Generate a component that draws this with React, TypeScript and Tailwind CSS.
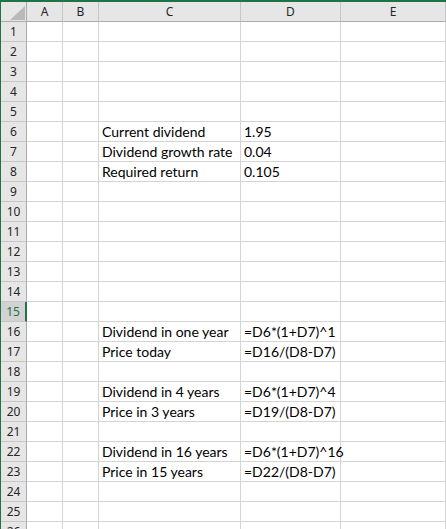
import React from "react";

const cols = ["A", "B", "C", "D", "E"];

// cell contents by row: [column C, column D]
const data: Record<number, [string, string]> = {
  6: ["Current dividend", "1.95"],
  7: ["Dividend growth rate", "0.04"],
  8: ["Required return", "0.105"],
  16: ["Dividend in one year", "=D6*(1+D7)^1"],
  17: ["Price today", "=D16/(D8-D7)"],
  19: ["Dividend in 4 years", "=D6*(1+D7)^4"],
  20: ["Price in 3 years", "=D19/(D8-D7)"],
  22: ["Dividend in 16 years", "=D6*(1+D7)^16"],
  23: ["Price in 15 years", "=D22/(D8-D7)"],
};

const selectedRow = 15;
const rows = Array.from({ length: 26 }, (_, i) => i + 1);

const headerFont = { fontFamily: '"Noto Sans", "DejaVu Sans", sans-serif' };
const cellFont = { fontFamily: 'Lato, "Liberation Sans", sans-serif' };

function Corner() {
  return (
    <div className="relative h-5 border-r border-b border-r-[#ababab] border-b-[#ababab] bg-[#e6e6e6]">
      <svg className="absolute left-[9px] top-[4px]" width="15" height="14" viewBox="0 0 15 14">
        <polygon points="15,0 15,14 0,14" fill="#b9b9b9" />
      </svg>
    </div>
  );
}

function ColHeader({ label }: { label: string }) {
  return (
    <div
      className="flex h-5 items-center justify-center border-r border-b border-r-[#c6c6c6] border-b-[#ababab] bg-[#e6e6e6] text-[12px] text-[#262626]"
      style={headerFont}
    >
      {label}
    </div>
  );
}

function RowHeader({ n }: { n: number }) {
  const sel = n === selectedRow;
  return (
    <div
      className={
        sel
          ? "flex h-5 items-center justify-center border-r-2 border-b border-r-[#217346] border-b-[#c6c6c6] bg-[#d2d2d2] text-[12px] text-[#217346]"
          : "flex h-5 items-center justify-center border-r border-b border-r-[#ababab] border-b-[#c6c6c6] bg-[#e6e6e6] text-[12px] text-[#262626]"
      }
      style={headerFont}
    >
      {n}
    </div>
  );
}

function Cell({ text }: { text?: string }) {
  return (
    <div
      className="h-5 whitespace-nowrap border-r border-b border-[#d4d4d4] pl-[3px] text-[14px] leading-[20px] text-black"
      style={cellFont}
    >
      {text}
    </div>
  );
}

export default function App() {
  return (
    <div className="h-[529px] w-[446px] overflow-hidden border-t-2 border-l border-[#217346] bg-white">
      <div className="grid grid-cols-[26px_36px_36px_142px_100px_1fr]">
        <Corner />
        {cols.map((c) => (
          <ColHeader key={c} label={c} />
        ))}
        {rows.map((n) => (
          <React.Fragment key={n}>
            <RowHeader n={n} />
            <Cell />
            <Cell />
            <Cell text={data[n]?.[0]} />
            <Cell text={data[n]?.[1]} />
            <Cell />
          </React.Fragment>
        ))}
      </div>
    </div>
  );
}
